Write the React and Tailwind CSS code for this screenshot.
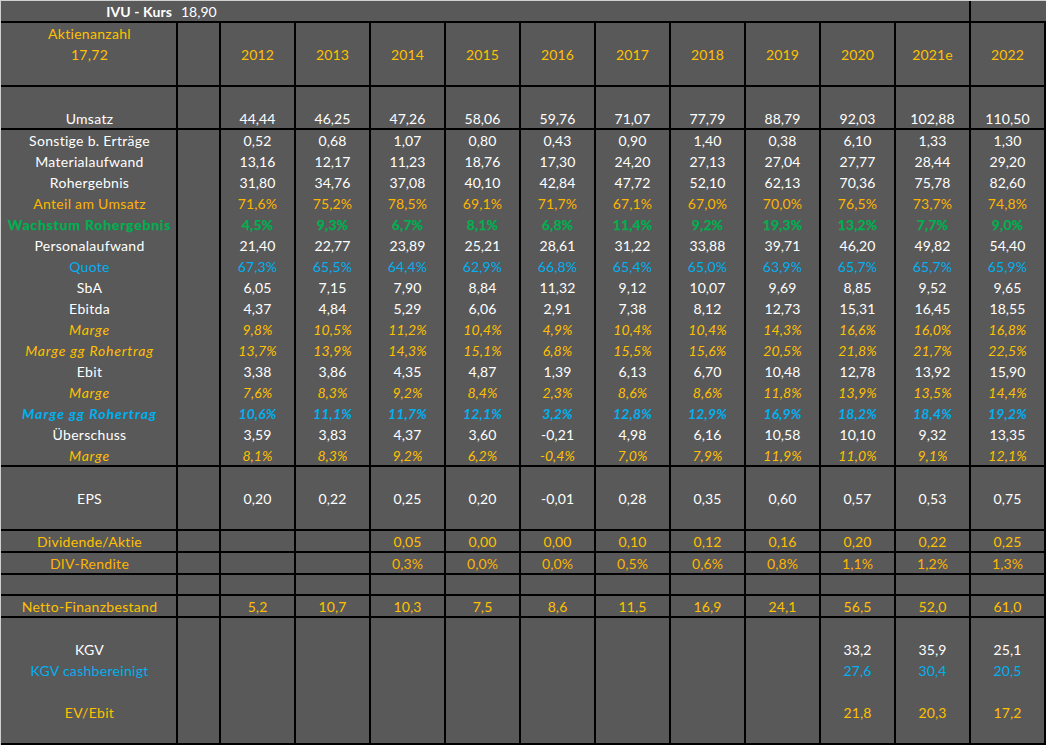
const W = "text-white";
const G = "text-[#ffc000]";
const O = "text-[#ffb400]";
const GR = "font-bold text-[#00b050] [-webkit-text-stroke:0.25px_#00b050]";
const B = "text-[#00b0f0]";
const GI = "italic text-[#ffc000]";
const BI = "font-bold italic text-[#00b0f0]";

const T_NORMAL = "tracking-[0.3px]";
const T_ITALIC = "tracking-[0.8px]";
const T_BOLD_ITALIC = "tracking-[1px]";
const T_BOLD = "tracking-[0.8px]";

const s = (str) => str.split(" ");
const blank = Array(11).fill("");
const last3 = (a, b, c) => ["", "", "", "", "", "", "", "", a, b, c];
const opt = (str) => s(str).map((x) => (x === "-" ? "" : x));
const Y = s("2012 2013 2014 2015 2016 2017 2018 2019 2020 2021e 2022");

const rows = [
  { l: "Aktienanzahl", c: G },
  { l: "17,72", c: G, v: Y },
  { end: true },
  {},
  { l: "Umsatz", c: W, end: true, v: s("44,44 46,25 47,26 58,06 59,76 71,07 77,79 88,79 92,03 102,88 110,50") },
  { l: "Sonstige b. Erträge", c: W, v: s("0,52 0,68 1,07 0,80 0,43 0,90 1,40 0,38 6,10 1,33 1,30") },
  { l: "Materialaufwand", c: W, v: s("13,16 12,17 11,23 18,76 17,30 24,20 27,13 27,04 27,77 28,44 29,20") },
  { l: "Rohergebnis", c: W, v: s("31,80 34,76 37,08 40,10 42,84 47,72 52,10 62,13 70,36 75,78 82,60") },
  { l: "Anteil am Umsatz", c: O, v: s("71,6% 75,2% 78,5% 69,1% 71,7% 67,1% 67,0% 70,0% 76,5% 73,7% 74,8%") },
  { l: "Wachstum Rohergebnis", c: GR, t: T_BOLD, v: s("4,5% 9,3% 6,7% 8,1% 6,8% 11,4% 9,2% 19,3% 13,2% 7,7% 9,0%") },
  { l: "Personalaufwand", c: W, v: s("21,40 22,77 23,89 25,21 28,61 31,22 33,88 39,71 46,20 49,82 54,40") },
  { l: "Quote", c: B, v: s("67,3% 65,5% 64,4% 62,9% 66,8% 65,4% 65,0% 63,9% 65,7% 65,7% 65,9%") },
  { l: "SbA", c: W, v: s("6,05 7,15 7,90 8,84 11,32 9,12 10,07 9,69 8,85 9,52 9,65") },
  { l: "Ebitda", c: W, v: s("4,37 4,84 5,29 6,06 2,91 7,38 8,12 12,73 15,31 16,45 18,55") },
  { l: "Marge", c: GI, t: T_ITALIC, v: s("9,8% 10,5% 11,2% 10,4% 4,9% 10,4% 10,4% 14,3% 16,6% 16,0% 16,8%") },
  { l: "Marge gg Rohertrag", c: GI, t: T_ITALIC, v: s("13,7% 13,9% 14,3% 15,1% 6,8% 15,5% 15,6% 20,5% 21,8% 21,7% 22,5%") },
  { l: "Ebit", c: W, v: s("3,38 3,86 4,35 4,87 1,39 6,13 6,70 10,48 12,78 13,92 15,90") },
  { l: "Marge", c: GI, t: T_ITALIC, v: s("7,6% 8,3% 9,2% 8,4% 2,3% 8,6% 8,6% 11,8% 13,9% 13,5% 14,4%") },
  { l: "Marge gg Rohertrag", c: BI, t: T_BOLD_ITALIC, v: s("10,6% 11,1% 11,7% 12,1% 3,2% 12,8% 12,9% 16,9% 18,2% 18,4% 19,2%") },
  { l: "Überschuss", c: W, v: s("3,59 3,83 4,37 3,60 -0,21 4,98 6,16 10,58 10,10 9,32 13,35") },
  { l: "Marge", c: GI, t: T_ITALIC, end: true, v: s("8,1% 8,3% 9,2% 6,2% -0,4% 7,0% 7,9% 11,9% 11,0% 9,1% 12,1%") },
  {},
  { l: "EPS", c: W, v: s("0,20 0,22 0,25 0,20 -0,01 0,28 0,35 0,60 0,57 0,53 0,75") },
  { end: true },
  { l: "Dividende/Aktie", c: G, end: true, v: opt("- - 0,05 0,00 0,00 0,10 0,12 0,16 0,20 0,22 0,25") },
  { l: "DIV-Rendite", c: O, end: true, v: opt("- - 0,3% 0,0% 0,0% 0,5% 0,6% 0,8% 1,1% 1,2% 1,3%") },
  { short: true },
  { l: "Netto-Finanzbestand", c: G, end: true, v: s("5,2 10,7 10,3 7,5 8,6 11,5 16,9 24,1 56,5 52,0 61,0") },
  {},
  { l: "KGV", c: W, v: last3("33,2", "35,9", "25,1") },
  { l: "KGV cashbereinigt", c: B, v: last3("27,6", "30,4", "20,5") },
  {},
  { l: "EV/Ebit", c: G, v: last3("21,8", "20,3", "17,2") },
  { end: true },
];

function Row({ l, c = W, v = blank, end, short, t = T_NORMAL }) {
  const height = end && !short ? "h-[22px]" : "h-[21px]";
  const line = end || short ? "border-b-2 border-black" : "";
  const nudge = end && !short ? "pt-[2px]" : "";
  return (
    <div className={`grid grid-cols-[177px_43px_repeat(11,75px)] ${height} ${line} ${c}`}>
      <div className={`flex items-center justify-center border-r-2 border-black pl-[2px] whitespace-nowrap ${t} ${nudge}`}>{l}</div>
      <div className="border-r-2 border-black" />
      {v.map((x, i) => (
        <div key={i} className={`flex items-center justify-center border-r-2 border-black tracking-[0.1px] ${nudge}`}>
          {x}
        </div>
      ))}
    </div>
  );
}

export default function App() {
  return (
    <div
      className="h-[745px] w-[1046px] overflow-hidden border-t border-l border-[#d0d0d0] bg-[#595959] text-[14px] leading-none text-white"
      style={{ fontFamily: '"Lato", "Open Sans", sans-serif' }}
    >
      <div className="grid h-[22px] grid-cols-[177px_793px_75px] border-b-2 border-black">
        <div className="flex items-center justify-end pt-[2px] pr-[6px] font-bold tracking-[0.1px]">IVU - Kurs</div>
        <div className="flex items-center border-r-2 border-black pt-[2px] pl-[3px]">18,90</div>
        <div />
      </div>
      {rows.map((r, i) => (
        <Row key={i} {...r} />
      ))}
    </div>
  );
}
